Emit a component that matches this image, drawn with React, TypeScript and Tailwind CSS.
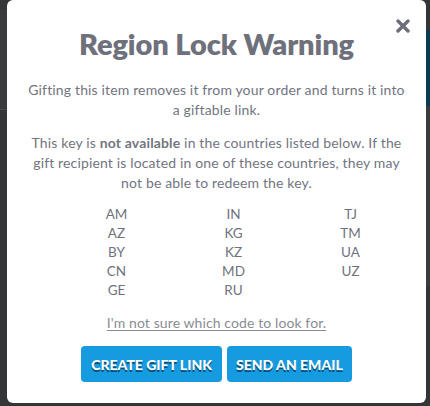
import React from "react"

const columns: string[][] = [
  ["AM", "AZ", "BY", "CN", "GE"],
  ["IN", "KG", "KZ", "MD", "RU"],
  ["TJ", "TM", "UA", "UZ"],
]

function CloseIcon() {
  return (
    <svg width="14" height="14" viewBox="0 0 14 14" fill="none">
      <path d="M2 2L12 12M12 2L2 12" stroke="#6c6f79" strokeWidth="3.4" strokeLinecap="round" />
    </svg>
  )
}

export default function App() {
  return (
    <div
      className="relative w-[430px] h-[406px] overflow-hidden bg-[#343536]"
      style={{ fontFamily: "Lato, 'Noto Sans', sans-serif" }}
    >
      {/* page behind the overlay */}
      <div className="absolute left-0 top-[10px] w-[7px] h-[100px] bg-[#3a3b3c] border-b border-[#4a4b4c]" />
      <div className="absolute right-0 top-[30px] w-[4px] h-[76px] bg-[#0c3a51]" />
      <div className="absolute right-0 top-[106px] w-[4px] h-[180px] bg-[#3a3b3c]" />

      <div className="relative ml-[7px] w-[419px] h-[403px] rounded-md bg-white flex flex-col items-center pt-[26px] text-[#72757f]">
        <button className="absolute right-[16px] top-[19px]">
          <CloseIcon />
        </button>

        <h2 className="text-[29px] leading-[36px] font-extrabold text-[#6e717b] tracking-[-0.1px]">
          Region Lock Warning
        </h2>

        <p className="mt-[18px] text-[14px] leading-[20px] text-center tracking-[0.15px]">
          Gifting this item removes it from your order and turns it into
          <br />a giftable link.
        </p>

        <p className="mt-[13px] text-[14px] leading-[20px] text-center tracking-[0.15px]">
          This key is <span className="font-bold">not available</span> in the countries listed below. If the
          <br />
          gift recipient is located in one of these countries, they may
          <br />
          not be able to redeem the key.
        </p>

        <div className="mt-[12px] grid grid-cols-3 w-[351px] self-start ml-[51px] text-[13.5px] leading-[19px] text-[#6f727c]">
          {columns.map((col, i) => (
            <div key={i} className="flex flex-col items-center">
              {col.map((c) => (
                <span key={c}>{c}</span>
              ))}
            </div>
          ))}
        </div>

        <a className="mt-[14px] text-[14px] leading-[18px] text-[#8a8c93] underline underline-offset-2 tracking-[0.1px]">
          I'm not sure which code to look for.
        </a>

        <div className="mt-[14px] flex gap-[5px]">
          <button className="h-[36px] px-[10px] rounded-[4px] bg-[#169be0] text-white text-[14px] font-black uppercase [text-shadow:0_2px_0_#0a4f78]">
            Create Gift Link
          </button>
          <button className="h-[36px] px-[9px] rounded-[4px] bg-[#169be0] text-white text-[14px] font-black uppercase [text-shadow:0_2px_0_#0a4f78]">
            Send an Email
          </button>
        </div>
      </div>
    </div>
  )
}
